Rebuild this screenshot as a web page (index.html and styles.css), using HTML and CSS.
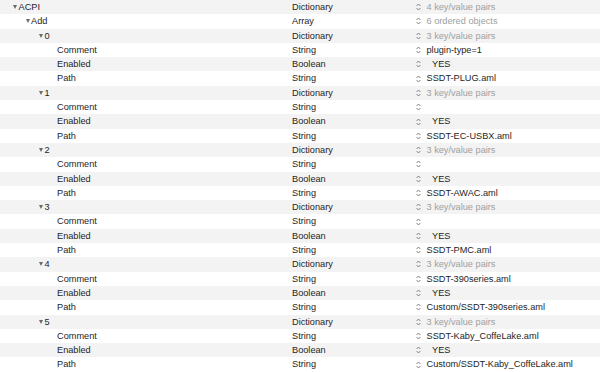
FILE: index.html
```html
<!doctype html>
<html>
<head>
<title>config.plist</title>
<meta charset="utf-8">
<link rel="stylesheet" href="styles.css">
</head>
<body>
<svg class="defs" width="0" height="0">
	<symbol id="updown" viewBox="0 0 5 8">
		<polyline points="0.6,3 2.5,1 4.4,3" fill="none" stroke="#7a7a7a" stroke-width="0.95"/>
		<polyline points="0.6,5 2.5,7 4.4,5" fill="none" stroke="#7a7a7a" stroke-width="0.95"/>
	</symbol>
</svg>

<div class="plist">
	<div class="row">
		<div class="key d0 open">ACPI</div>
		<div class="type">Dictionary</div>
		<div class="val"><svg class="ud"><use href="#updown"/></svg><span class="dim">4 key/value pairs</span></div>
	</div>
	<div class="row">
		<div class="key d1 open">Add</div>
		<div class="type">Array</div>
		<div class="val"><svg class="ud"><use href="#updown"/></svg><span class="dim">6 ordered objects</span></div>
	</div>

	<!-- 0 -->
	<div class="row">
		<div class="key d2 open">0</div>
		<div class="type">Dictionary</div>
		<div class="val"><svg class="ud"><use href="#updown"/></svg><span class="dim">3 key/value pairs</span></div>
	</div>
	<div class="row">
		<div class="key d3">Comment</div>
		<div class="type">String</div>
		<div class="val"><svg class="ud"><use href="#updown"/></svg><span>plugin-type=1</span></div>
	</div>
	<div class="row">
		<div class="key d3">Enabled</div>
		<div class="type">Boolean</div>
		<div class="val"><svg class="ud"><use href="#updown"/></svg><span class="bool">YES</span></div>
	</div>
	<div class="row">
		<div class="key d3">Path</div>
		<div class="type">String</div>
		<div class="val"><svg class="ud"><use href="#updown"/></svg><span>SSDT-PLUG.aml</span></div>
	</div>

	<!-- 1 -->
	<div class="row">
		<div class="key d2 open">1</div>
		<div class="type">Dictionary</div>
		<div class="val"><svg class="ud"><use href="#updown"/></svg><span class="dim">3 key/value pairs</span></div>
	</div>
	<div class="row">
		<div class="key d3">Comment</div>
		<div class="type">String</div>
		<div class="val"><svg class="ud"><use href="#updown"/></svg><span></span></div>
	</div>
	<div class="row">
		<div class="key d3">Enabled</div>
		<div class="type">Boolean</div>
		<div class="val"><svg class="ud"><use href="#updown"/></svg><span class="bool">YES</span></div>
	</div>
	<div class="row">
		<div class="key d3">Path</div>
		<div class="type">String</div>
		<div class="val"><svg class="ud"><use href="#updown"/></svg><span>SSDT-EC-USBX.aml</span></div>
	</div>

	<!-- 2 -->
	<div class="row">
		<div class="key d2 open">2</div>
		<div class="type">Dictionary</div>
		<div class="val"><svg class="ud"><use href="#updown"/></svg><span class="dim">3 key/value pairs</span></div>
	</div>
	<div class="row">
		<div class="key d3">Comment</div>
		<div class="type">String</div>
		<div class="val"><svg class="ud"><use href="#updown"/></svg><span></span></div>
	</div>
	<div class="row">
		<div class="key d3">Enabled</div>
		<div class="type">Boolean</div>
		<div class="val"><svg class="ud"><use href="#updown"/></svg><span class="bool">YES</span></div>
	</div>
	<div class="row">
		<div class="key d3">Path</div>
		<div class="type">String</div>
		<div class="val"><svg class="ud"><use href="#updown"/></svg><span>SSDT-AWAC.aml</span></div>
	</div>

	<!-- 3 -->
	<div class="row">
		<div class="key d2 open">3</div>
		<div class="type">Dictionary</div>
		<div class="val"><svg class="ud"><use href="#updown"/></svg><span class="dim">3 key/value pairs</span></div>
	</div>
	<div class="row">
		<div class="key d3">Comment</div>
		<div class="type">String</div>
		<div class="val"><svg class="ud"><use href="#updown"/></svg><span></span></div>
	</div>
	<div class="row">
		<div class="key d3">Enabled</div>
		<div class="type">Boolean</div>
		<div class="val"><svg class="ud"><use href="#updown"/></svg><span class="bool">YES</span></div>
	</div>
	<div class="row">
		<div class="key d3">Path</div>
		<div class="type">String</div>
		<div class="val"><svg class="ud"><use href="#updown"/></svg><span>SSDT-PMC.aml</span></div>
	</div>

	<!-- 4 -->
	<div class="row">
		<div class="key d2 open">4</div>
		<div class="type">Dictionary</div>
		<div class="val"><svg class="ud"><use href="#updown"/></svg><span class="dim">3 key/value pairs</span></div>
	</div>
	<div class="row">
		<div class="key d3">Comment</div>
		<div class="type">String</div>
		<div class="val"><svg class="ud"><use href="#updown"/></svg><span>SSDT-390series.aml</span></div>
	</div>
	<div class="row">
		<div class="key d3">Enabled</div>
		<div class="type">Boolean</div>
		<div class="val"><svg class="ud"><use href="#updown"/></svg><span class="bool">YES</span></div>
	</div>
	<div class="row">
		<div class="key d3">Path</div>
		<div class="type">String</div>
		<div class="val"><svg class="ud"><use href="#updown"/></svg><span>Custom/SSDT-390series.aml</span></div>
	</div>

	<!-- 5 -->
	<div class="row">
		<div class="key d2 open">5</div>
		<div class="type">Dictionary</div>
		<div class="val"><svg class="ud"><use href="#updown"/></svg><span class="dim">3 key/value pairs</span></div>
	</div>
	<div class="row">
		<div class="key d3">Comment</div>
		<div class="type">String</div>
		<div class="val"><svg class="ud"><use href="#updown"/></svg><span>SSDT-Kaby_CoffeLake.aml</span></div>
	</div>
	<div class="row">
		<div class="key d3">Enabled</div>
		<div class="type">Boolean</div>
		<div class="val"><svg class="ud"><use href="#updown"/></svg><span class="bool">YES</span></div>
	</div>
	<div class="row">
		<div class="key d3">Path</div>
		<div class="type">String</div>
		<div class="val"><svg class="ud"><use href="#updown"/></svg><span>Custom/SSDT-Kaby_CoffeLake.aml</span></div>
	</div>
</div>
</body>
</html>
```

FILE: styles.css
```css
html,body{margin:0;padding:0;background:#fff;}
body{font:9.2px "Liberation Sans",Arial,sans-serif;color:#1e1e1e;overflow:hidden;}
.defs{position:absolute;}

.plist{display:flex;flex-direction:column;width:600px;}
.row{display:flex;height:14.3px;line-height:14.3px;white-space:nowrap;}
.row:nth-child(odd){background:#f3f3f3;}

/* key column, indented by depth */
.key{width:292px;box-sizing:border-box;position:relative;}
.d0{padding-left:18.5px;}
.d1{padding-left:31px;}
.d2{padding-left:44.5px;}
.d3{padding-left:57px;}
.open::before{content:"";position:absolute;top:5px;margin-left:-5.4px;border-left:2.5px solid transparent;border-right:2.5px solid transparent;border-top:4.4px solid #6a6a6a;}

.type{width:124px;}

.val{display:flex;align-items:center;flex:1;}
.ud{width:5px;height:8px;margin-right:5.5px;flex:none;}
.dim{color:#a0a0a0;}
.bool{padding-left:5.5px;}
```
